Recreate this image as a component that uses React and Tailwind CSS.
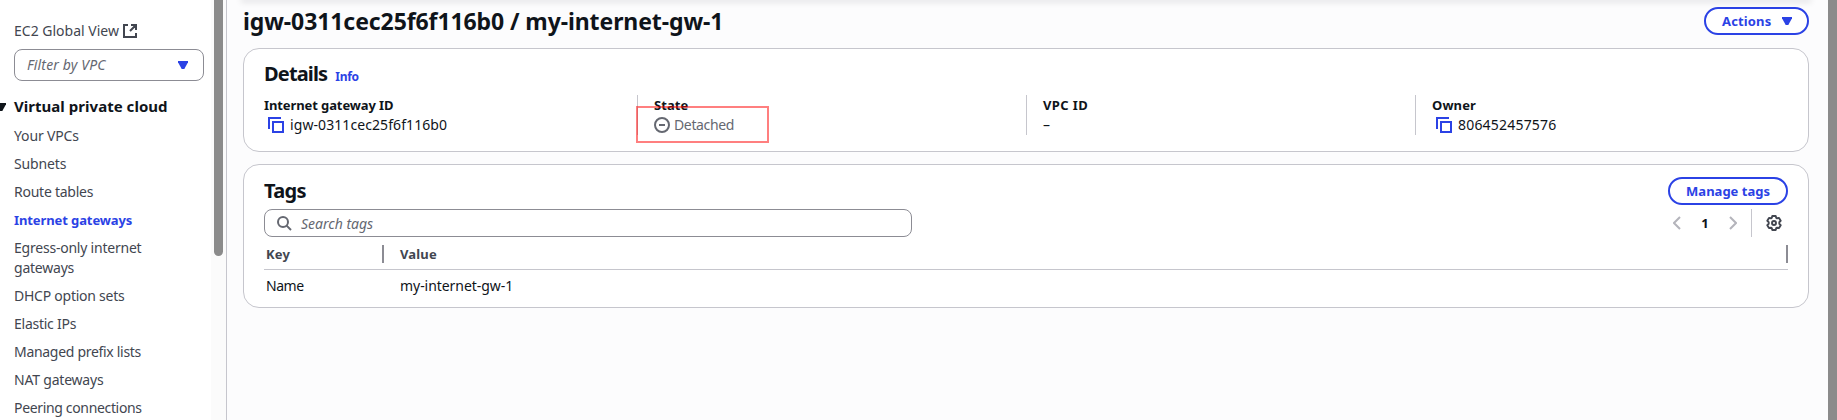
import React from 'react';

const navItems = [
  { label: 'Your VPCs', track: 'tracking-[-0.15px]' },
  { label: 'Subnets', track: 'tracking-[-0.15px]' },
  { label: 'Route tables', track: 'tracking-[-0.25px]' },
  { label: 'Internet gateways', track: 'tracking-[-0.1px]', active: true },
  { label: 'Egress-only internet gateways', track: 'tracking-[-0.22px]' },
  { label: 'DHCP option sets', track: 'tracking-[-0.25px]' },
  { label: 'Elastic IPs', track: 'tracking-[-0.25px]' },
  { label: 'Managed prefix lists', track: 'tracking-[-0.3px]' },
  { label: 'NAT gateways', track: 'tracking-[-0.2px]' },
  { label: 'Peering connections', track: 'tracking-[-0.34px]' },
];

function Caret({ className }) {
  return (
    <svg className={className} width="10" height="8" viewBox="0 0 10 8" fill="currentColor">
      <path d="M0 0h10v1.200L6.300 8H3.700L0 1.200z" />
    </svg>
  );
}

function ExternalIcon() {
  return (
    <svg width="14" height="14" viewBox="0 0 14 14" fill="none" stroke="currentColor" strokeWidth="2">
      <path d="M5 1H1v12h12V9M8 1h5v5M13 1L7 7" />
    </svg>
  );
}

function CopyIcon() {
  return (
    <svg width="16" height="16" viewBox="0 0 16 16" fill="none" stroke="#2b42e5" strokeWidth="2">
      <path d="M1 12V1h12" />
      <path d="M5 5h10v10H5z" />
    </svg>
  );
}

function MinusCircle() {
  return (
    <svg width="16" height="16" viewBox="0 0 16 16" fill="none" stroke="currentColor" strokeWidth="2">
      <circle cx="8" cy="8" r="7" />
      <path d="M5 8h6" />
    </svg>
  );
}

function SearchIcon() {
  return (
    <svg width="16" height="16" viewBox="0 0 16 16" fill="none" stroke="#656871" strokeWidth="2">
      <circle cx="6" cy="7" r="5" />
      <path d="M9.600 10.600L14 15" />
    </svg>
  );
}

function Chevron({ right }) {
  return (
    <svg width="8" height="14" viewBox="0 0 8 14" fill="none" stroke="#b4b4bb" strokeWidth="2">
      <path d={right ? 'M1 1l6 6-6 6' : 'M7 1L1 7l6 6'} />
    </svg>
  );
}

function GearIcon() {
  return (
    <svg width="16" height="16" viewBox="0 0 16 16" fill="none" stroke="#424650" strokeWidth="1.9" strokeLinejoin="round">
      <path d="M6.300 1h3.400l.5 1.800.9.500 1.900-.4 1.700 2.900-1.400 1.400v1.600l1.400 1.400-1.700 2.900-1.900-.4-.9.500-.5 1.800H6.300l-.5-1.800-.9-.500-1.900.4-1.700-2.900 1.400-1.400V7.200L1.300 5.800 3 2.900l1.900.4.9-.500z" />
      <circle cx="8" cy="8" r="2" />
    </svg>
  );
}

function Field({ label, track, first, children }) {
  return (
    <div className={first ? 'w-[373px]' : 'h-10 w-[389px] border-l border-[#c6c6cd] pl-4'}>
      <div className={`h-5 text-[13px] font-bold leading-5 ${track}`}>{label}</div>
      <div className="flex h-5 items-center leading-5">{children}</div>
    </div>
  );
}

export default function App() {
  return (
    <div className="flex h-[420px] w-[1837px] overflow-hidden bg-[#fcfcfd] font-['Noto_Sans','Open_Sans',sans-serif] text-sm text-[#0f141a]">
      <aside className="flex w-[227px] shrink-0 border-r border-[#c6c6cd]">
        <nav className="w-[211px] overflow-hidden bg-white pl-3.5 text-[#424650]">
          <div className="mt-[21px] flex h-5 items-center gap-1 leading-5">
            <span>EC2 Global View</span>
            <ExternalIcon />
          </div>
          <div className="mt-2 flex h-8 w-[190px] items-center justify-between rounded-lg border border-[#8c8c94] pl-3 pr-[15px] italic text-[#656871]">
            <span className="tracking-[0.15px]">Filter by VPC</span>
            <Caret className="text-[#2b42e5]" />
          </div>
          <div className="-ml-3.5 mt-3.5 flex h-6 items-center text-[15px] font-bold text-[#0f141a]">
            <Caret className="-ml-1 mr-2 w-2.5 shrink-0" />
            <span className="whitespace-nowrap tracking-[0.03px]">Virtual private cloud</span>
          </div>
          <ul className="mt-[7px] flex flex-col gap-2">
            {navItems.map((n) => (
              <li
                key={n.label}
                className={`w-[150px] leading-5 ${n.track} ${n.active ? 'text-[13px] font-bold text-[#2b42e5]' : ''}`}
              >
                {n.label}
              </li>
            ))}
          </ul>
        </nav>
        <div className="w-[15px] bg-[#fbfbfb] pl-[3px]">
          <div className="h-64 w-[9px] rounded-b-full bg-[#8b8b8b]" />
        </div>
      </aside>

      <main className="flex w-[1601px] shrink-0 flex-col">
        <div className="mx-4 h-0 w-[1566px] shadow-[0_0_6px_2px_rgba(0,7,22,0.13)]" />
        <header className="ml-4 mt-[7px] flex h-7 w-[1566px] items-center justify-between">
          <h1 className="text-[23px] font-bold leading-7 tracking-[-0.09px]">igw-0311cec25f6f116b0 / my-internet-gw-1</h1>
          <button className="flex h-7 w-[105px] items-center justify-between rounded-full border-2 border-[#2b42e5] bg-white pl-4 pr-[15px] text-[13px] font-bold leading-5 text-[#2b42e5]">
            <span className="tracking-[0.15px]">Actions</span>
            <Caret />
          </button>
        </header>

        <section className="ml-4 mt-[13px] h-[104px] w-[1566px] rounded-2xl border border-[#c6c6cd] bg-white pl-5">
          <div className="mt-[13px] flex h-6 items-baseline gap-2">
            <h2 className="text-xl font-bold leading-6 tracking-[-0.85px]">Details</h2>
            <span className="text-xs font-bold tracking-[-0.3px] text-[#2b42e5]">Info</span>
          </div>
          <div className="relative mt-[9px] flex">
            <Field label="Internet gateway ID" track="tracking-[-0.1px]" first>
              <span className="ml-1 mr-1.5"><CopyIcon /></span>
              <span className="tracking-[0.08px]">igw-0311cec25f6f116b0</span>
            </Field>
            <Field label="State" track="tracking-[0.05px]">
              <span className="flex items-center gap-1 text-[#656871]">
                <MinusCircle />
                <span className="tracking-[-0.35px]">Detached</span>
              </span>
            </Field>
            <Field label="VPC ID" track="tracking-[0.4px]">–</Field>
            <Field label="Owner" track="tracking-[0.1px]">
              <span className="ml-1 mr-1.5"><CopyIcon /></span>
              <span className="tracking-[0.2px]">806452457576</span>
            </Field>
            <div className="absolute left-[372px] top-[11px] h-[37px] w-[133px] border-2 border-[#ff0000]/50" />
          </div>
        </section>

        <section className="ml-4 mt-3 h-[144px] w-[1566px] rounded-2xl border border-[#c6c6cd] bg-white px-5">
          <div className="mt-3 flex h-7 items-center justify-between">
            <h2 className="text-xl font-bold leading-6 tracking-[-0.7px]">Tags</h2>
            <button className="h-7 w-[120px] rounded-full border-2 border-[#2b42e5] text-[13px] font-bold leading-5 text-[#2b42e5]">
              Manage tags
            </button>
          </div>
          <div className="mt-1 flex h-7 items-center justify-between">
            <div className="flex h-7 w-[648px] items-center gap-2 rounded-lg border border-[#8c8c94] pl-3 italic text-[#656871]">
              <SearchIcon />
              <span className="mt-0.5">Search tags</span>
            </div>
            <div className="flex h-7 items-center pr-1.5">
              <Chevron />
              <span className="w-12 text-center text-[13px] font-bold leading-5">1</span>
              <Chevron right />
              <span className="ml-3.5 mr-[14px] h-7 w-px bg-[#c6c6cd]" />
              <GearIcon />
            </div>
          </div>
          <div className="flex h-[33px] items-center border-b border-[#c6c6cd] pl-0.5 text-[13px] font-bold leading-5 text-[#424650]">
            <div className="mt-0.5 w-[116px] tracking-[0.2px]">Key</div>
            <div className="mt-0.5 h-[18px] w-0.5 bg-[#8c8c94]" />
            <div className="ml-4 mt-0.5 flex-1 tracking-[0.15px]">Value</div>
            <div className="mt-0.5 h-[18px] w-0.5 bg-[#8c8c94]" />
          </div>
          <div className="mt-1.5 flex h-5 items-center pl-0.5">
            <div className="w-[134px] tracking-[-0.45px]">Name</div>
            <div className="tracking-[-0.05px]">my-internet-gw-1</div>
          </div>
        </section>
      </main>

      <div className="w-[9px] bg-[#8b8b8b]" />
    </div>
  );
}
